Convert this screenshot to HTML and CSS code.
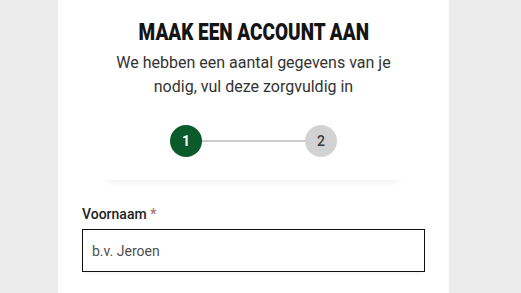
FILE: index.html
```html
<!DOCTYPE html>
<html lang="nl">
<head>
<meta charset="utf-8">
<title>Maak een account aan</title>
<link rel="stylesheet" href="styles.css">
</head>
<body>
<main class="card">
  <header class="intro">
    <h1 class="title"><span class="title-text">MAAK EEN ACCOUNT AAN</span></h1>
    <p class="subtitle">We hebben een aantal gegevens van je<br>nodig, vul deze zorgvuldig in</p>
    <div class="stepper">
      <span class="step step-active">1</span>
      <span class="step-line"></span>
      <span class="step">2</span>
    </div>
  </header>
  <form class="form">
    <div class="field">
      <label class="label" for="voornaam">Voornaam <span class="req">*</span></label>
      <input class="input" id="voornaam" type="text" placeholder="b.v. Jeroen">
    </div>
  </form>
</main>
</body>
</html>
```

FILE: styles.css
```css
html, body {
  margin: 0;
  padding: 0;
}
body {
  background: #ececec;
  font-family: Roboto, "Liberation Sans", Arial, sans-serif;
  color: #222;
  height: 293px;
  overflow: hidden;
}
.card {
  margin-left: 58px;
  width: 391px;
  min-height: 293px;
  background: #fff;
  box-sizing: border-box;
  padding: 18px 24px 0;
}
.intro {
  margin: 0 18px;
  padding-bottom: 23px;
  display: flex;
  flex-direction: column;
  align-items: center;
  box-shadow: 0 8px 8px -8px rgba(0, 0, 0, 0.1);
}
.title {
  margin: 0 0 5px;
  font-size: 24px;
  line-height: 28px;
  font-weight: 900;
  color: #141414;
  text-align: center;
  white-space: nowrap;
}
.title-text {
  display: inline-block;
  transform: scaleX(0.79);
}
.subtitle {
  margin: 0;
  font-size: 16px;
  line-height: 24px;
  color: #333;
  text-align: center;
}
.stepper {
  margin-top: 26px;
  display: flex;
  align-items: center;
}
.step {
  width: 32px;
  height: 32px;
  border-radius: 50%;
  background: #d2d2d2;
  color: #3a3a3a;
  font-size: 14px;
  font-weight: 500;
  display: flex;
  align-items: center;
  justify-content: center;
}
.step-active {
  background: #0a5a2a;
  color: #fff;
  font-weight: 700;
}
.step-line {
  width: 103px;
  height: 2px;
  background: #cbcbcb;
}
.form {
  padding-top: 24px;
}
.field {
  display: flex;
  flex-direction: column;
}
.label {
  font-size: 14px;
  line-height: 20px;
  font-weight: 500;
  color: #222;
  margin-bottom: 5px;
}
.req {
  color: #b36a6a;
}
.input {
  height: 43px;
  box-sizing: border-box;
  border: 1px solid #111;
  border-radius: 0;
  padding: 0 9px;
  font-family: Roboto, "Liberation Sans", Arial, sans-serif;
  font-size: 14px;
  color: #222;
  background: #fff;
  box-shadow: 0 3px 4px -2px rgba(0, 0, 0, 0.06);
  outline: none;
}
.input::placeholder {
  color: #505050;
  opacity: 1;
}
```
